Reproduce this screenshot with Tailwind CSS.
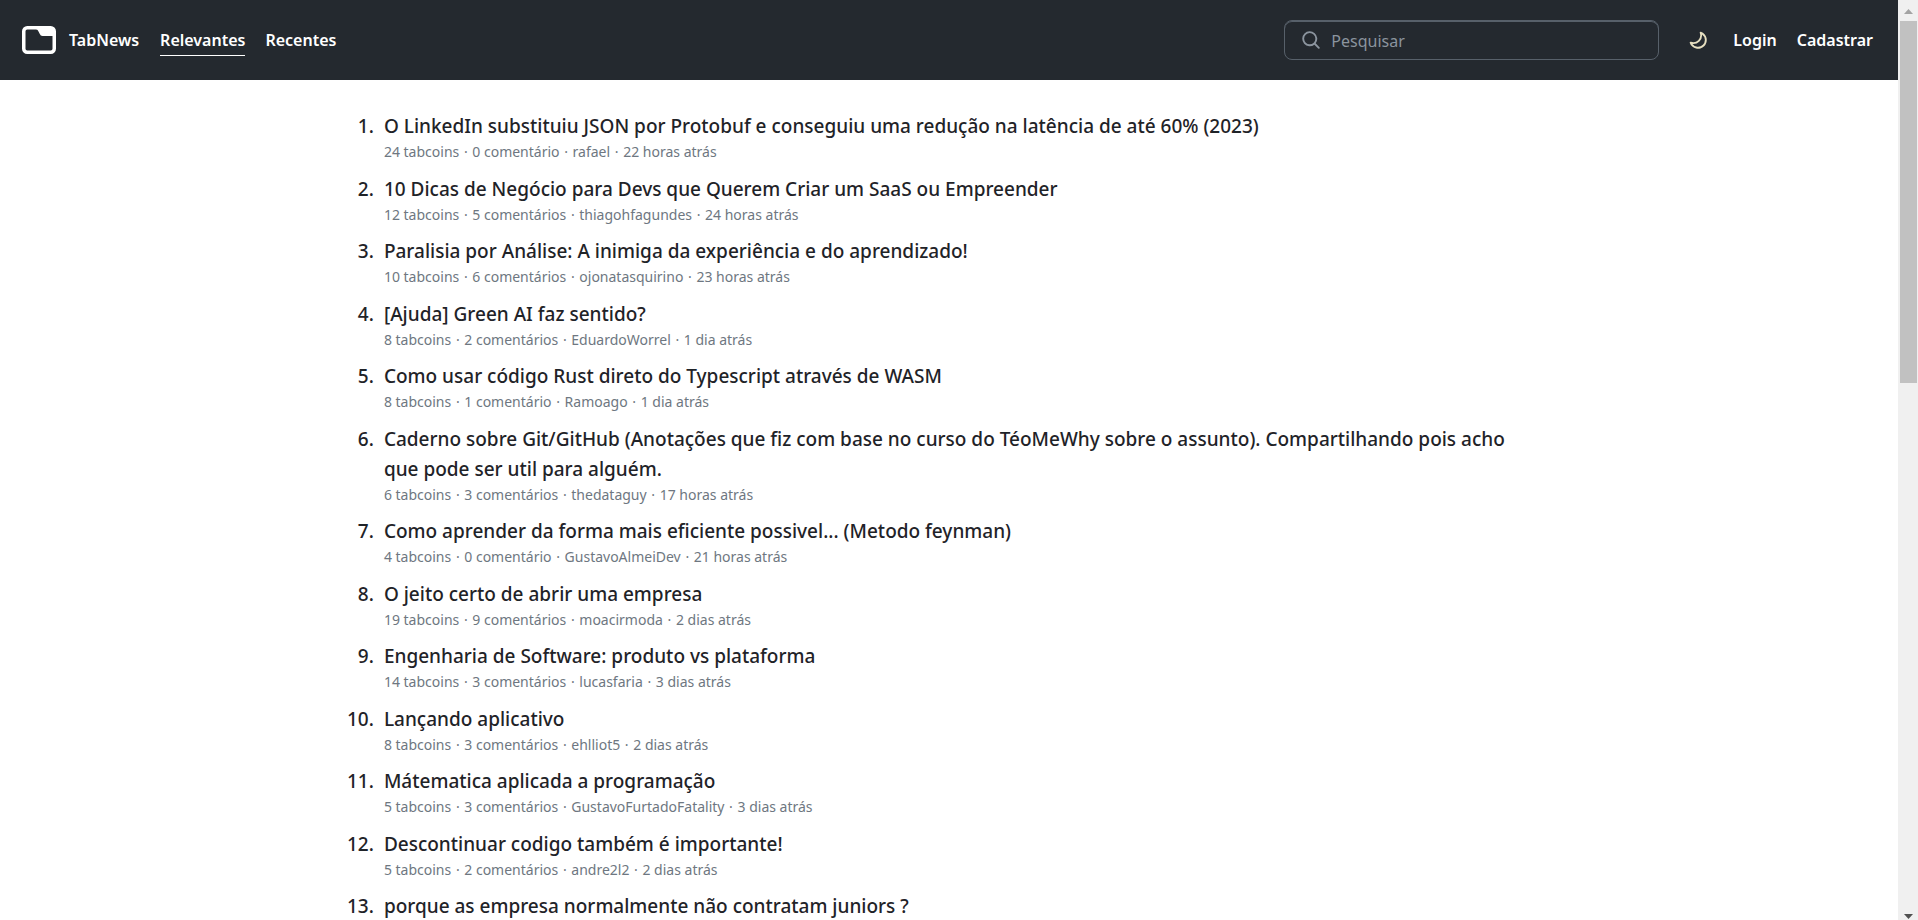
<!DOCTYPE html>
<html lang="pt-BR">
<head>
<meta charset="utf-8">
<title>TabNews</title>
<script src="https://cdn.jsdelivr.net/npm/@tailwindcss/browser@4"></script>
</head>
<body class="flex h-screen overflow-hidden bg-white font-['Noto_Sans','Open_Sans',sans-serif] text-[#1f2328]">
<div class="flex min-w-0 flex-1 flex-col overflow-hidden">
  <header class="flex h-20 shrink-0 items-center bg-[#24292f] pl-[22px] pr-[25px] text-base font-semibold text-white">
    <a href="#" class="flex items-center gap-[13px]">
      <svg class="h-7 w-[34px]" viewBox="0 0 34 28" aria-hidden="true"><rect x="1.750" y="1.750" width="30.500" height="24.500" rx="3.500" fill="none" stroke="#fff" stroke-width="3.500"/><path d="M14 1h14q5 0 5 5v4H20.500q-2 0-2.700-2L16.500 5.500Q15.500 3 14 3Z" fill="#fff"/></svg>
      <span>TabNews</span>
    </a>
    <nav class="ml-[21px] flex gap-5">
      <a href="#" class="border-b border-white pt-px leading-[30px]">Relevantes</a>
      <a href="#" class="pt-px leading-[30px]">Recentes</a>
    </nav>
    <label class="ml-auto flex h-10 w-[375px] items-center gap-2.5 rounded-lg border border-[#57606a] px-4 shadow-[inset_0_1px_0_#57606a]">
      <svg class="size-5 shrink-0 fill-[#8b949e]" viewBox="0 0 16 16" aria-hidden="true"><path d="M10.680 11.740a6 6 0 0 1-7.922-8.982 6 6 0 0 1 8.982 7.922l3.040 3.040a.749.749 0 0 1-.326 1.275.749.749 0 0 1-.734-.215ZM11.500 7a4.499 4.499 0 1 0-8.997 0A4.499 4.499 0 0 0 11.500 7Z"/></svg>
      <input type="search" placeholder="Pesquisar" aria-label="Pesquisar" class="w-full bg-transparent pt-0.5 font-normal outline-none placeholder:text-[#8b949e]">
    </label>
    <button type="button" aria-label="Alterar tema" class="ml-[29px]"><svg class="size-5 fill-[#e6dfc0]" viewBox="0 0 16 16" aria-hidden="true"><path d="M9.598 1.591a.749.749 0 0 1 .785-.175 7.001 7.001 0 1 1-8.967 8.967.75.75 0 0 1 .961-.960 5.500 5.500 0 0 0 7.046-7.046.75.75 0 0 1 .175-.786Zm1.616 1.945a7 7 0 0 1-7.678 7.678 5.499 5.499 0 1 0 7.678-7.678Z"/></svg></button>
    <nav class="ml-[25px] flex gap-5"><a href="#">Login</a><a href="#">Cadastrar</a></nav>
  </header>
  <main class="mx-auto w-full max-w-[1212px] pl-1 pr-8 pt-[31px]">
    <ol id="list" class="grid grid-cols-[auto_1fr] gap-x-2.5 gap-y-2.5"></ol>
  </main>
</div>
<div class="flex w-5 shrink-0 flex-col items-center bg-[#f0f0f0]" aria-hidden="true">
  <svg class="h-[21px] w-5 shrink-0" viewBox="0 0 20 21"><path d="M6 14l4.500-5L15 14Z" fill="#a3a3a3"/></svg>
  <div class="h-[362px] w-[17px] bg-[#c1c1c1]"></div>
  <svg class="mt-auto h-[21px] w-5 shrink-0" viewBox="0 0 20 21"><path d="M6 15l4.500 5L15 15Z" fill="#505050"/></svg>
</div>
<script>
const posts = [
  ["O LinkedIn substituiu JSON por Protobuf e conseguiu uma redução na latência de até 60% (2023)", "24 tabcoins · 0 comentário · rafael · 22 horas atrás"],
  ["10 Dicas de Negócio para Devs que Querem Criar um SaaS ou Empreender", "12 tabcoins · 5 comentários · thiagohfagundes · 24 horas atrás"],
  ["Paralisia por Análise: A inimiga da experiência e do aprendizado!", "10 tabcoins · 6 comentários · ojonatasquirino · 23 horas atrás"],
  ["[Ajuda] Green AI faz sentido?", "8 tabcoins · 2 comentários · EduardoWorrel · 1 dia atrás"],
  ["Como usar código Rust direto do Typescript através de WASM", "8 tabcoins · 1 comentário · Ramoago · 1 dia atrás"],
  ["Caderno sobre Git/GitHub (Anotações que fiz com base no curso do TéoMeWhy sobre o assunto). Compartilhando pois acho que pode ser util para alguém.", "6 tabcoins · 3 comentários · thedataguy · 17 horas atrás"],
  ["Como aprender da forma mais eficiente possivel... (Metodo feynman)", "4 tabcoins · 0 comentário · GustavoAlmeiDev · 21 horas atrás"],
  ["O jeito certo de abrir uma empresa", "19 tabcoins · 9 comentários · moacirmoda · 2 dias atrás"],
  ["Engenharia de Software: produto vs plataforma", "14 tabcoins · 3 comentários · lucasfaria · 3 dias atrás"],
  ["Lançando aplicativo", "8 tabcoins · 3 comentários · ehlliot5 · 2 dias atrás"],
  ["Mátematica aplicada a programação", "5 tabcoins · 3 comentários · GustavoFurtadoFatality · 3 dias atrás"],
  ["Descontinuar codigo também é importante!", "5 tabcoins · 2 comentários · andre2l2 · 2 dias atrás"],
  ["porque as empresa normalmente não contratam juniors ?", ""]
];
const separator = ' <span class="mx-px">·</span> ';
document.getElementById("list").innerHTML = posts.map(([title, meta], i) => `
  <li class="group contents">
    <span class="text-right text-[19px] font-medium leading-[30px]">${i + 1}.</span>
    <article class="group-odd:pb-px">
      <h2 class="text-[19px] font-medium leading-[30px]"><a href="#">${title}</a></h2>
      <p class="text-sm leading-[22px] text-[#6e7781]">${meta.split(" · ").join(separator)}</p>
    </article>
  </li>`).join("");
</script>
</body>
</html>
